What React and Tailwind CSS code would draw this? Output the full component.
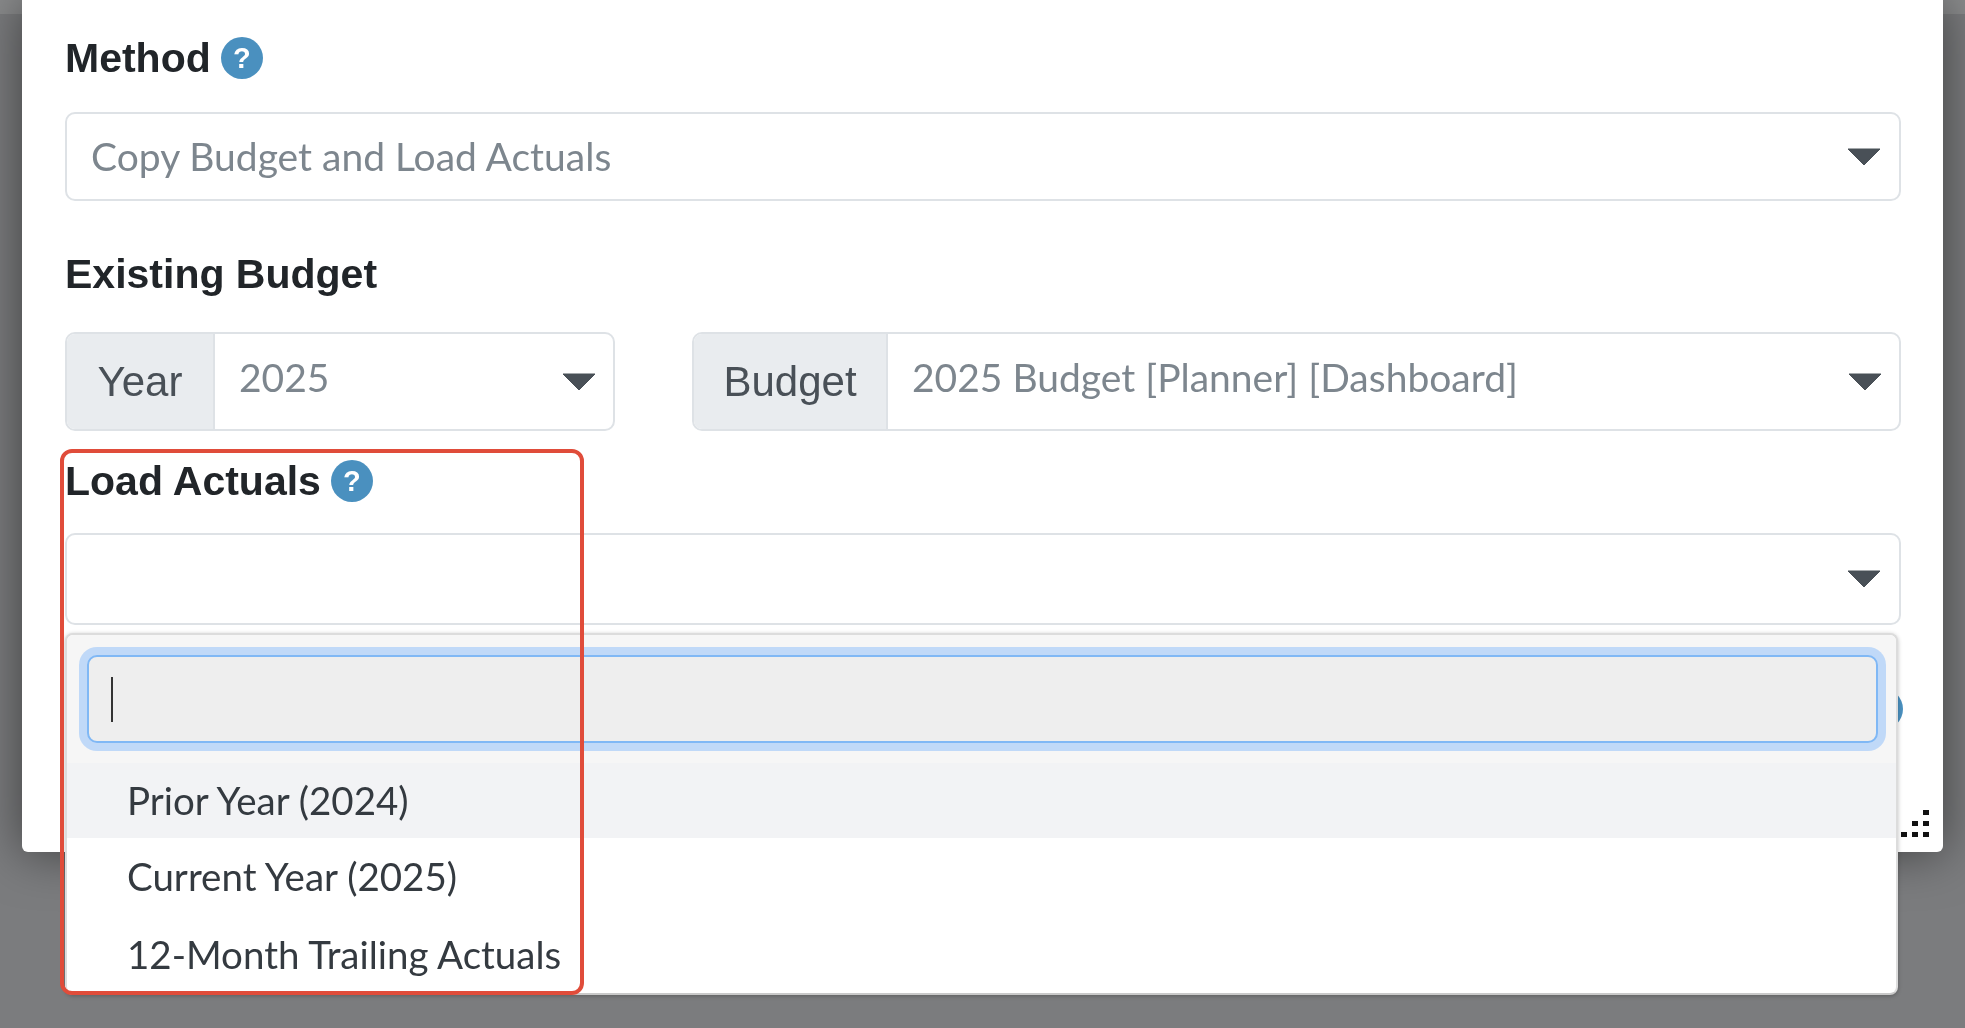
const sans = "font-['Liberation_Sans',Arial,sans-serif]";
const soft = "font-['Lato','Noto_Sans',sans-serif]";

function Caret() {
  return (
    <svg width="34" height="18" viewBox="0 0 34 18" className="shrink-0">
      <path d="M1 1 H33 L17 17 Z" fill="#495057" stroke="#495057" strokeLinejoin="round" />
    </svg>
  );
}

function HelpIcon() {
  return (
    <span className={`flex h-[42px] w-[42px] shrink-0 items-center justify-center rounded-full bg-[#4a90bf] text-[29px] font-bold text-white ${sans}`}>
      ?
    </span>
  );
}

function FieldLabel({ children, help, className }) {
  return (
    <div className={`flex h-[42px] items-center gap-[10px] text-[41px] font-bold leading-none text-[#212529] ${sans} ${className}`}>
      <span>{children}</span>
      {help && <HelpIcon />}
    </div>
  );
}

function SelectBox({ value, className }) {
  return (
    <div className={`flex items-center justify-between rounded-[10px] border-2 border-[#dee2e6] bg-white pl-[24px] pr-[18px] ${className}`}>
      <span className={`text-[39px] text-[#7d868e] ${soft}`}>{value}</span>
      <Caret />
    </div>
  );
}

function InputGroup({ label, value, labelWidth, className }) {
  return (
    <div className={`flex h-[99px] overflow-hidden rounded-[10px] border-2 border-[#dee2e6] bg-white ${className}`}>
      <div className={`flex items-center justify-center border-r-2 border-[#dee2e6] bg-[#e9ecef] text-[42px] text-[#495057] ${sans} ${labelWidth}`}>
        {label}
      </div>
      <div className="flex flex-1 items-center justify-between pl-[24px] pr-[17px]">
        <span className={`mb-[9px] text-[39px] text-[#7d868e] ${soft}`}>{value}</span>
        <Caret />
      </div>
    </div>
  );
}

export default function App() {
  return (
    <div className="relative h-[1028px] w-[1965px] overflow-hidden bg-[#7b7c7e] blur-[0.6px]">
      {/* fundo atras do modal */}
      <div className="h-[14px] w-full bg-[#8a8b8c]" />

      {/* Modal */}
      <div className="absolute left-[22px] top-0 flex h-[852px] w-[1921px] flex-col rounded-b-[6px] bg-white pl-[43px] pr-[42px] pt-[37px] shadow-[0_0_50px_rgba(0,0,0,0.5)]">
        <FieldLabel help>Method</FieldLabel>
        <SelectBox value="Copy Budget and Load Actuals" className="mt-[33px] h-[89px]" />

        <FieldLabel className="mt-[52px]">Existing Budget</FieldLabel>
        <div className="mt-[37px] flex gap-[77px]">
          <InputGroup label="Year" value="2025" labelWidth="w-[148px]" className="w-[550px]" />
          <InputGroup label="Budget" value="2025 Budget [Planner] [Dashboard]" labelWidth="w-[194px]" className="flex-1" />
        </div>

        <FieldLabel help className="mt-[29px]">Load Actuals</FieldLabel>
        <SelectBox value="" className="mt-[31px] h-[92px]" />

        {/* icone de ajuda coberto pelo dropdown */}
        <span className="absolute left-[1839px] top-[688px] h-[42px] w-[42px] rounded-full bg-[#4a90bf]" />

        {/* Alca de redimensionar */}
        <svg width="28" height="28" viewBox="0 0 28 28" className="absolute left-[1879px] top-[810px]">
          <g fill="#111">
            <rect x="22" y="0" width="6" height="5" />
            <rect x="11" y="11" width="6" height="5" />
            <rect x="22" y="11" width="6" height="5" />
            <rect x="0" y="22" width="6" height="5" />
            <rect x="11" y="22" width="6" height="5" />
            <rect x="22" y="22" width="6" height="5" />
          </g>
        </svg>
      </div>

      {/* Dropdown aberto */}
      <div className="absolute left-[65px] top-[633px] flex h-[362px] w-[1833px] flex-col overflow-hidden rounded-[8px] border-2 border-[#dcdcdc] border-b-[#c9c9c9] bg-white shadow-[0_1px_4px_rgba(0,0,0,0.25)]">
        <div className="h-[128px] shrink-0 bg-[#f6f6f6] pl-[20px] pr-[18px] pt-[20px]">
          <div className="flex h-[88px] items-center rounded-[10px] border-2 border-[#80b8f5] bg-[#eeeeee] pl-[22px] shadow-[0_0_0_8px_#c0d9f8]">
            <span className="h-[45px] w-[2px] bg-[#333]" />
          </div>
        </div>
        <div className={`flex h-[75px] shrink-0 items-center bg-[#f2f3f5] pl-[60px] text-[38.5px] text-[#343a40] ${soft}`}>Prior Year (2024)</div>
        <div className={`flex h-[78px] shrink-0 items-center pl-[60px] text-[38.5px] text-[#343a40] ${soft}`}>Current Year (2025)</div>
        <div className={`flex h-[78px] shrink-0 items-center pl-[60px] text-[38.5px] text-[#343a40] ${soft}`}>12-Month Trailing Actuals</div>
      </div>

      {/* Destaque vermelho */}
      <div className="absolute left-[60px] top-[449px] h-[546px] w-[524px] rounded-[12px] border-[4px] border-[#e04c3a]" />
    </div>
  );
}
